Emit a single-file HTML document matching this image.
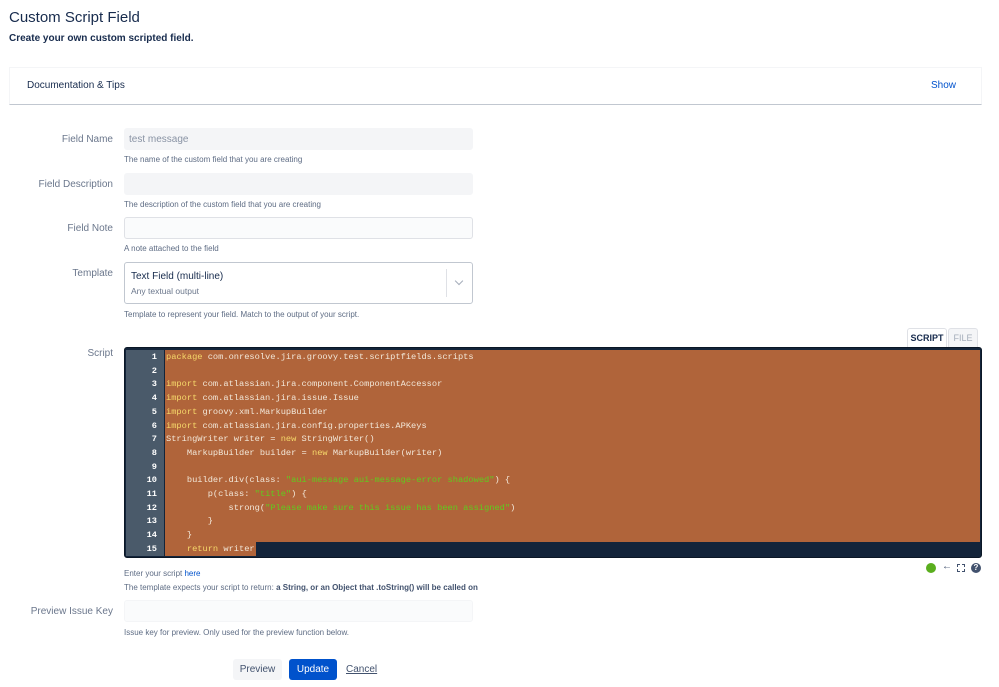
<!DOCTYPE html>
<html><head><meta charset="utf-8"><style>
*{box-sizing:border-box;margin:0;padding:0}
body{width:999px;height:687px;background:#fff;font-family:"Liberation Sans",sans-serif;color:#172b4d;position:relative;overflow:hidden}
.a{position:absolute}
.lbl{position:absolute;right:886px;font-size:10px;color:#6b778c;text-align:right;white-space:nowrap}
.in{position:absolute;left:124px;width:349px;height:22px;border-radius:3px;background:#f4f5f7;border:1px solid #f4f5f7}
.hint{position:absolute;left:124px;font-size:8px;color:#5e6c84;white-space:nowrap}
.code{position:absolute;left:124px;top:347px;width:858px;height:211px;background:#13243a;border-radius:3px;border:1px solid #0b1726}
.gut{position:absolute;left:1px;top:2px;width:38px;height:206px;background:#4a5a6a}
.org{position:absolute;left:40px;top:2px;width:815px;height:192px;background:#b0643a}
.org2{position:absolute;left:40px;top:194px;width:91px;height:14px;background:#b0643a}
.ln{position:absolute;font-family:"Liberation Mono",monospace;font-size:8.7px;line-height:13.7px;white-space:pre;top:3px}
.k{color:#f6d86a}.s{color:#5fcc1e}
</style></head><body>
<div class="a" style="left:9px;top:9px;font-size:15px;color:#172b4d">Custom Script Field</div>
<div class="a" style="left:9px;top:33px;font-size:10px;font-weight:bold;color:#172b4d">Create your own custom scripted field.</div>
<div class="a" style="left:9px;top:67px;width:973px;height:38px;border-top:1px solid #f4f5f7;border-left:1px solid #f4f5f7;border-right:1px solid #f4f5f7;border-bottom:1px solid #c1c7d0"></div>
<div class="a" style="left:27px;top:80px;font-size:10px;color:#172b4d">Documentation &amp; Tips</div>
<div class="a" style="left:931px;top:80px;font-size:10px;color:#0052cc">Show</div>

<div class="lbl" style="top:134px">Field Name</div>
<div class="in" style="top:128px"><span style="position:absolute;left:4px;top:5px;font-size:10px;color:#8993a4">test message</span></div>
<div class="hint" style="top:155px">The name of the custom field that you are creating</div>
<div class="lbl" style="top:179px">Field Description</div>
<div class="in" style="top:173px"></div>
<div class="hint" style="top:200px">The description of the custom field that you are creating</div>
<div class="lbl" style="top:223px">Field Note</div>
<div class="in" style="top:217px;background:#fafbfc;border-color:#dfe1e6"></div>
<div class="hint" style="top:244px">A note attached to the field</div>
<div class="lbl" style="top:268px">Template</div>
<div class="a" style="left:124px;top:262px;width:349px;height:42px;border:1px solid #c1c7d0;border-radius:3px;background:#fff"></div>
<div class="a" style="left:131px;top:271px;font-size:10px;color:#172b4d">Text Field (multi-line)</div>
<div class="a" style="left:131px;top:286px;font-size:8.5px;color:#6b778c">Any textual output</div>
<div class="a" style="left:446px;top:269px;width:1px;height:28px;background:#dfe1e6"></div>
<div class="a" style="left:456px;top:278px;width:6px;height:6px;border-right:1px solid #a5adba;border-bottom:1px solid #a5adba;transform:rotate(45deg)"></div>
<div class="hint" style="top:310px">Template to represent your field. Match to the output of your script.</div>

<div class="a" style="left:907px;top:328px;width:40px;height:19px;border:1px solid #dfe1e6;border-bottom:none;border-radius:3px 3px 0 0;background:#fff;font-size:9px;font-weight:bold;text-align:center;line-height:18px">SCRIPT</div>
<div class="a" style="left:948px;top:328px;width:30px;height:19px;border:1px solid #dfe1e6;border-bottom:none;border-radius:3px 3px 0 0;background:#f4f5f7;color:#a5adba;font-size:9px;text-align:center;line-height:18px">FILE</div>
<div class="lbl" style="top:348px">Script</div>
<div class="code"><div class="gut"></div><div class="org"></div><div class="org2"></div>
<div class="ln" style="left:12px;width:20px;text-align:right;color:#fff;font-weight:bold">1
2
3
4
5
6
7
8
9
10
11
12
13
14
15</div>
<div class="ln" style="left:41px;color:#f2e7d8"><span class="k">package</span> com.onresolve.jira.groovy.test.scriptfields.scripts

<span class="k">import</span> com.atlassian.jira.component.ComponentAccessor
<span class="k">import</span> com.atlassian.jira.issue.Issue
<span class="k">import</span> groovy.xml.MarkupBuilder
<span class="k">import</span> com.atlassian.jira.config.properties.APKeys
StringWriter writer = <span class="k">new</span> StringWriter()
    MarkupBuilder builder = <span class="k">new</span> MarkupBuilder(writer)

    builder.div(class: <span class="s">"aui-message aui-message-error shadowed"</span>) {
        p(class: <span class="s">"title"</span>) {
            strong(<span class="s">"Please make sure this issue has been assigned"</span>)
        }
    }
    <span class="k">return</span> writer</div>
</div>
<div class="a" style="left:926px;top:563px;width:10px;height:10px;border-radius:50%;background:#5aae1e"></div>
<div class="a" style="left:942px;top:561px;font-size:10px;color:#42526e">←</div>
<div class="a" style="left:957px;top:564px;width:8px;height:8px;border:1px dashed #42526e"></div>
<div class="a" style="left:971px;top:563px;width:10px;height:10px;border-radius:50%;background:#42526e;color:#fff;font-size:8px;text-align:center;line-height:10px;font-weight:bold">?</div>
<div class="hint" style="top:569px">Enter your script <span style="color:#0052cc">here</span></div>
<div class="hint" style="top:583px">The template expects your script to return: <b style="color:#42526e">a String, or an Object that .toString() will be called on</b></div>
<div class="lbl" style="top:606px">Preview Issue Key</div>
<div class="in" style="top:600px;background:#fafbfc;border-color:#f4f5f7"></div>
<div class="hint" style="top:628px">Issue key for preview. Only used for the preview function below.</div>
<div class="a" style="left:233px;top:659px;width:49px;height:21px;background:#f4f5f7;border-radius:3px;font-size:10px;text-align:center;line-height:21px;color:#42526e">Preview</div>
<div class="a" style="left:289px;top:659px;width:48px;height:21px;background:#0052cc;border-radius:3px;font-size:10px;text-align:center;line-height:21px;color:#fff">Update</div>
<div class="a" style="left:346px;top:664px;font-size:10px;color:#42526e;text-decoration:underline">Cancel</div>
</body></html>
